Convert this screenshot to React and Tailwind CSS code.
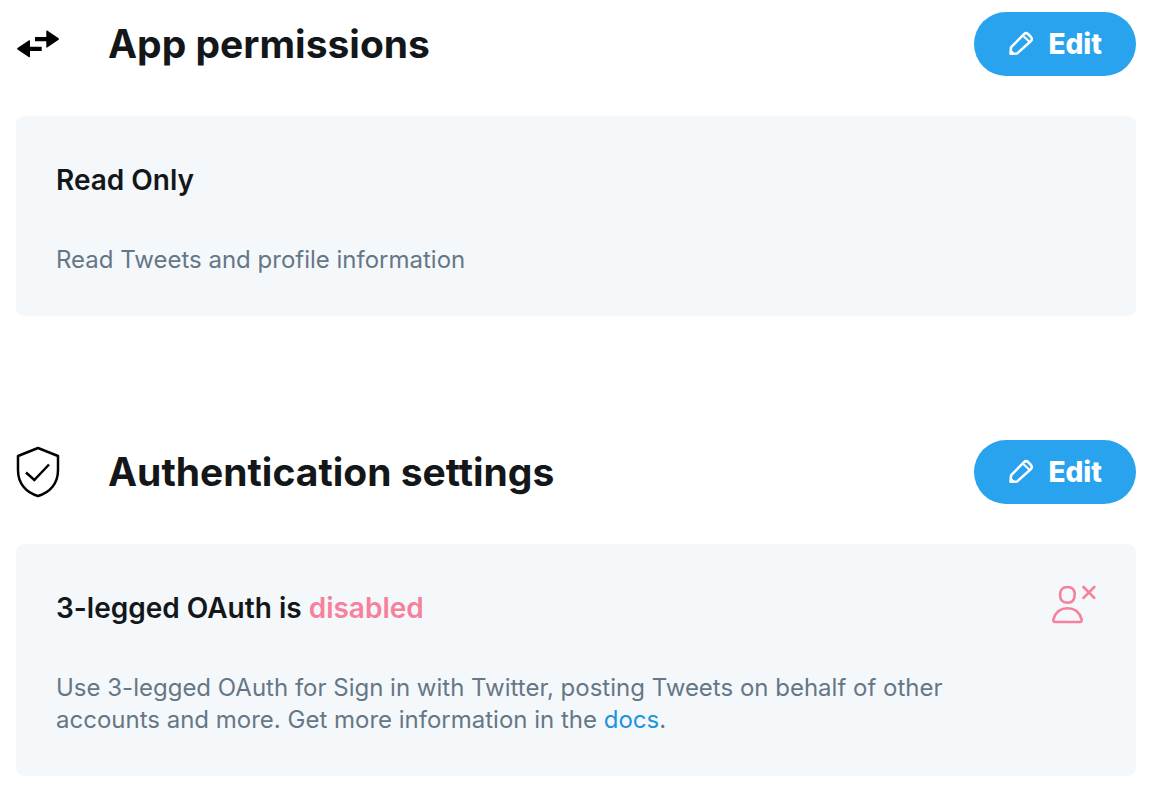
import React from 'react';

const ArrowsIcon = () => (
  <svg viewBox="0 0 44 52" className="h-[52px] w-11 text-black" fill="currentColor" aria-hidden="true">
    <path d="M31.200 12.600L42.600 20.200Q43.400 21 42.600 21.800L31.200 29.600Q30.300 30 30.300 29V23.200H19V19H30.300V13.200Q30.300 12.200 31.200 12.600Z" />
    <path d="M13 22.300L1.500 30Q0.700 30.800 1.500 31.600L13 39.200Q14 39.600 14 38.600V33H25.700V28.800H14V22.900Q14 21.900 13 22.300Z" />
  </svg>
);

const ShieldIcon = () => (
  <svg
    viewBox="0 0 44 52"
    className="h-[52px] w-11 text-black"
    fill="none"
    stroke="currentColor"
    strokeWidth="2.500"
    aria-hidden="true"
  >
    <path d="M22 2L42 10V24C42 37.500 34 46.500 22 50C10 46.500 2 37.500 2 24V10Z" strokeLinejoin="round" />
    <path d="M10 26.500L18.300 34L33 18.500" />
  </svg>
);

const PencilIcon = () => (
  <svg
    viewBox="0 0 26 26"
    className="size-[26px]"
    fill="none"
    stroke="currentColor"
    strokeWidth="2.500"
    strokeLinejoin="round"
    aria-hidden="true"
  >
    <path d="M2.500 22.800L3 16.300L16 3.200Q18 1.200 20 3L23 6Q24.700 8 23 10L9.200 22.400Z" />
    <path d="M15.300 5L21.700 11" strokeWidth="2" />
    <path d="M2.500 18.600L6.600 22.600L2.500 22.800Z" fill="currentColor" strokeWidth="1" />
  </svg>
);

const UserDisabledIcon = () => (
  <svg
    viewBox="0 0 46 40"
    className="h-10 w-[46px]"
    fill="none"
    stroke="currentColor"
    strokeWidth="2.600"
    strokeLinecap="round"
    aria-hidden="true"
  >
    <path d="M17.400 3C22.200 3 24.700 6 24.700 10.500C24.700 16 22.500 18.700 17.400 18.700C12.300 18.700 10.100 16 10.100 10.500C10.100 6 12.600 3 17.400 3Z" />
    <path d="M5.300 38H29.700C31.400 38 32.100 36.700 31.500 35C29.500 28.500 24.500 24.300 17.500 24.300C10.500 24.300 5.500 28.500 3.500 35C2.900 36.700 3.600 38 5.300 38Z" />
    <path d="M33.500 3L44.300 13.800M44.300 3L33.500 13.800" />
  </svg>
);

const Section = ({ icon, title, children }) => (
  <section>
    <header className="flex h-16 items-center">
      {icon}
      <h2 className="ml-12 flex-1 text-[39px] leading-[48px] font-bold">{title}</h2>
      <button
        type="button"
        className="flex h-16 items-center gap-[14px] rounded-full bg-[#2aa3ef] px-[34px] text-[28px] leading-8 font-extrabold text-white"
      >
        <PencilIcon />
        Edit
      </button>
    </header>
    <div className="mt-10 rounded-lg bg-[#f5f8fb] p-10">{children}</div>
  </section>
);

const App = () => (
  <main className="space-y-[124px] bg-white px-4 pt-3 pb-4 pr-[18px] font-['Inter',sans-serif] text-[#14171a]">
    <Section icon={<ArrowsIcon />} title="App permissions">
      <h3 className="text-[28px] leading-[48px] font-semibold">Read Only</h3>
      <p className="mt-10 text-2xl leading-8 text-[#657786]">Read Tweets and profile information</p>
    </Section>

    <Section icon={<ShieldIcon />} title="Authentication settings">
      <div className="flex items-start justify-between">
        <h3 className="text-[28px] leading-[48px] font-semibold">
          3-legged OAuth is <span className="text-[#f7819c]">disabled</span>
        </h3>
        <span className="text-[#f7819c]">
          <UserDisabledIcon />
        </span>
      </div>
      <p className="mt-10 max-w-[920px] text-2xl leading-8 text-[#657786]">
        Use 3-legged OAuth for Sign in with Twitter, posting Tweets on behalf of other accounts and
        more. Get more information in the{' '}
        <a href="#docs" className="text-[#1b95e0]">
          docs
        </a>
        .
      </p>
    </Section>
  </main>
);

export default App;
